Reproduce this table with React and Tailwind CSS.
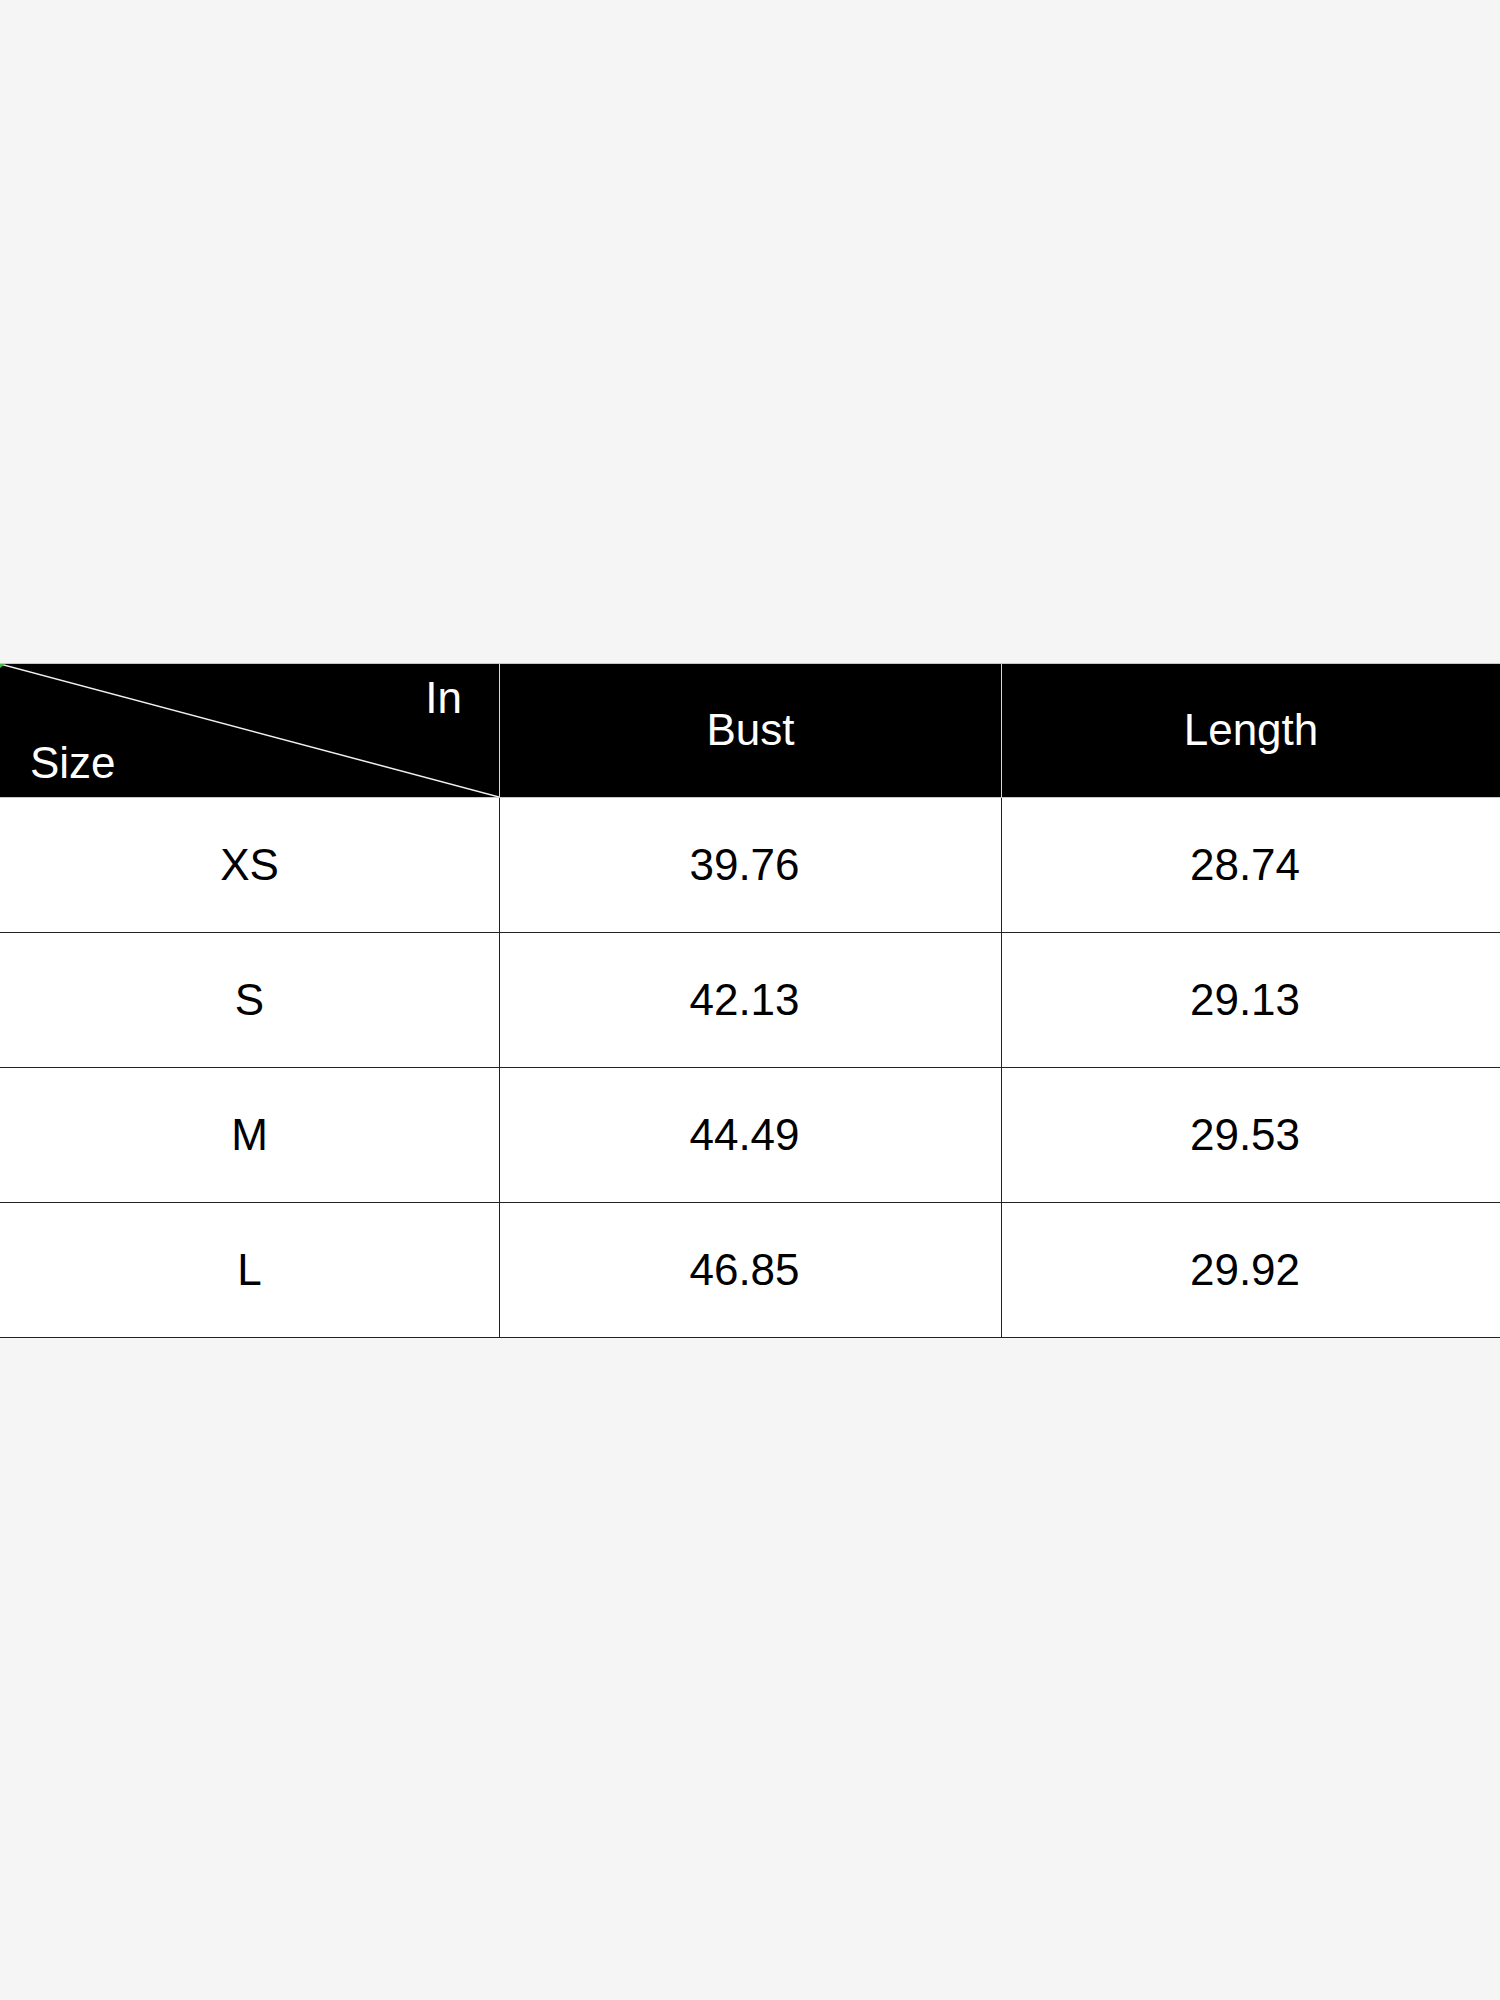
const rows = [
  ["XS", "39.76", "28.74"],
  ["S", "42.13", "29.13"],
  ["M", "44.49", "29.53"],
  ["L", "46.85", "29.92"],
];

export default function App() {
  return (
    <div
      className="w-full h-[2000px] bg-[#f5f5f5] flex flex-col justify-center"
      style={{ fontFamily: '"Liberation Sans", Arial, sans-serif' }}
    >
      <div className="w-full">
        {/* header */}
        <div className="grid grid-cols-[499px_502px_1fr] h-[135px] bg-black border-t border-b border-[#c8c8c8] text-white text-[44px]">
          <div className="relative">
            <svg className="absolute inset-0 w-full h-full" viewBox="0 0 499 133" preserveAspectRatio="none">
              <line x1="0" y1="0" x2="499" y2="133" stroke="#f0f0f0" strokeWidth="1.5" />
              <path d="M0 0 L5 0 L0 4 Z" fill="#3fbf3f" />
            </svg>
            <span className="absolute right-[37px] top-[12px] leading-none">In</span>
            <span className="absolute left-[30px] bottom-[12px] leading-none">Size</span>
          </div>
          <div className="border-l border-[#d8d8d8] flex items-center justify-center">Bust</div>
          <div className="border-l border-[#d8d8d8] flex items-center justify-center">Length</div>
        </div>
        {/* body */}
        {rows.map((r) => (
          <div
            key={r[0]}
            className="grid grid-cols-[499px_502px_1fr] h-[135px] bg-white border-b border-[#222] text-black text-[44px]"
          >
            <div className="flex items-center justify-center">{r[0]}</div>
            <div className="border-l border-[#222] flex items-center justify-center pr-3">{r[1]}</div>
            <div className="border-l border-[#222] flex items-center justify-center pr-3">{r[2]}</div>
          </div>
        ))}
      </div>
    </div>
  );
}
